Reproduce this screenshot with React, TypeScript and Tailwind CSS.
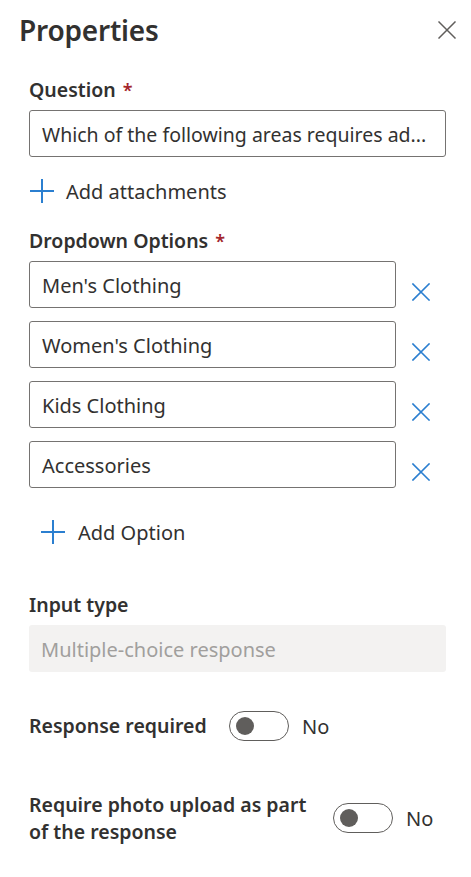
import React from "react";

const font = { fontFamily: '"Noto Sans", "Open Sans", sans-serif' };

function XIcon({ color, size = 18, sw = 1.6 }: { color: string; size?: number; sw?: number }) {
  return (
    <svg width={size} height={size} viewBox="0 0 18 18" fill="none">
      <path d="M1 1 L17 17 M17 1 L1 17" stroke={color} strokeWidth={sw} strokeLinecap="square" />
    </svg>
  );
}

function PlusIcon() {
  return (
    <svg width="24" height="24" viewBox="0 0 24 24" fill="none">
      <path d="M12 0 V24 M0 12 H24" stroke="#2b7fd0" strokeWidth="2" />
    </svg>
  );
}

function Toggle() {
  return (
    <div className="flex items-center gap-[13px]">
      <div className="w-[60px] h-[30px] rounded-full border-[1.5px] border-[#605e5c] flex items-center pl-[6px] box-border">
        <div className="w-[18px] h-[18px] rounded-full bg-[#605e5c]" />
      </div>
      <span className="text-[20px] text-[#323130] pt-[2px]">No</span>
    </div>
  );
}

export default function App() {
  const options = ["Men's Clothing", "Women's Clothing", "Kids Clothing", "Accessories"];
  return (
    <div className="w-[471px] h-[877px] bg-white text-[#323130] overflow-hidden" style={font}>
      <div className="flex items-center justify-between pl-[19px] pr-[15px] pt-[10px] h-[50px]">
        <div className="text-[28px] font-semibold leading-[40px] tracking-[-0.2px]">Properties</div>
        <XIcon color="#605e5c" size={18} sw={1.5} />
      </div>

      <div className="pl-[29px] pr-[25px] flex flex-col">
        <div className="mt-[26px] h-[28px] flex items-center text-[19.5px] font-semibold">
          Question<span className="text-[#a4262c] ml-[7px] text-[18px]">*</span>
        </div>
        <div className="mt-[6px] h-[47px] border border-[#757371] rounded-[3px] flex items-center px-[12px] pt-[3px] text-[19.5px] whitespace-nowrap overflow-hidden">
          Which of the following areas requires ad...
        </div>

        <div className="mt-[20px] h-[28px] flex items-center gap-[12px] pl-[1px] text-[20px]">
          <PlusIcon />
          <span className="pt-[2px]">Add attachments</span>
        </div>

        <div className="mt-[22px] h-[28px] flex items-center text-[19.5px] font-semibold">
          Dropdown Options<span className="text-[#a4262c] ml-[7px] text-[18px]">*</span>
        </div>

        <div className="mt-[6px] flex flex-col gap-[13px]">
          {options.map((o) => (
            <div key={o} className="flex items-center">
              <div className="w-[367px] h-[47px] border border-[#757371] rounded-[3px] flex items-center px-[12px] pt-[3px] text-[20px]">
                {o}
              </div>
              <div className="ml-[16px] mt-[15px]">
                <XIcon color="#2b7fd0" size={18} sw={1.6} />
              </div>
            </div>
          ))}
        </div>

        <div className="mt-[30px] h-[28px] flex items-center gap-[13px] pl-[12px] text-[20px]">
          <PlusIcon />
          <span className="pt-[2px]">Add Option</span>
        </div>

        <div className="mt-[45px] h-[28px] flex items-center text-[19.5px] font-semibold">Input type</div>
        <div className="mt-[6px] h-[47px] bg-[#f3f2f1] rounded-[3px] flex items-center px-[12px] pt-[3px] text-[20px] text-[#a19f9d]">
          Multiple-choice response
        </div>

        <div className="mt-[39px] h-[30px] flex items-center">
          <span className="text-[19.5px] font-semibold whitespace-nowrap w-[200px]">Response required</span>
          <Toggle />
        </div>

        <div className="mt-[50px] flex items-center">
          <span className="text-[19.5px] font-semibold leading-[27px] w-[304px]">
            Require photo upload as part
            <br />
            of the response
          </span>
          <Toggle />
        </div>
      </div>
    </div>
  );
}
